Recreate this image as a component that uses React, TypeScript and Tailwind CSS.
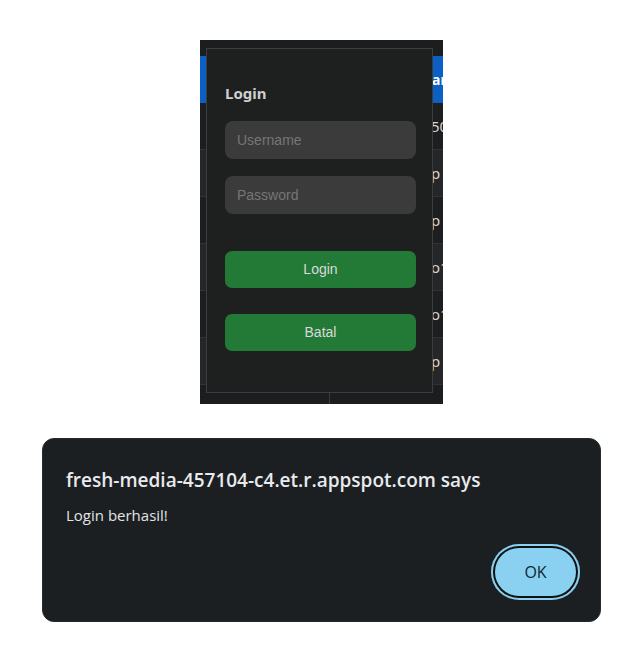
const rows = ['50', 'p', 'p', 'o1', 'o1', 'p'];

function TableBehind() {
  return (
    <div className="absolute inset-0 overflow-hidden bg-[#1c1d1e]">
      <div className="h-[16px]" />
      <div className="grid h-[47px] grid-cols-[130px_102px_1fr] items-center bg-[#0b5fc5] text-[14px] font-bold text-white">
        <div />
        <div />
        <div>ama</div>
      </div>
      {rows.map((r, i) => (
        <div
          key={i}
          className={`grid h-[47px] grid-cols-[130px_101px_1fr] items-center border-b border-[#303234] text-[15px] text-[#d4d4d4] ${
            i % 2 === 1 ? 'bg-[#252628]' : 'bg-[#1d1e1f]'
          }`}
        >
          <div className="h-full border-r border-[#303234]" />
          <div />
          <div>{r}</div>
        </div>
      ))}
      <div className="grid h-[20px] grid-cols-[130px_1fr]">
        <div className="h-full border-r border-[#3a3c3e]" />
        <div />
      </div>
    </div>
  );
}

function LoginModal() {
  return (
    <div className="absolute left-[6px] top-[8px] flex h-[345px] w-[227px] flex-col border border-[#3c3d3e] bg-[#1e1f1f] px-[18px] pt-[34px] font-['Liberation_Sans',Arial,sans-serif]">
      <h2 className="mb-[18px] font-['Noto_Sans',sans-serif] text-[15px] font-bold leading-[20px] text-[#cfcfcf]">Login</h2>
      <input
        className="h-[38px] w-[191px] rounded-[8px] bg-[#3b3b3b] px-[12px] text-[14px] text-[#ddd] outline-none placeholder:text-[#767676]"
        placeholder="Username"
      />
      <input
        type="password"
        className="mt-[17px] h-[38px] w-[191px] rounded-[8px] bg-[#3b3b3b] px-[12px] text-[14px] text-[#ddd] outline-none placeholder:text-[#767676]"
        placeholder="Password"
      />
      <button className="mt-[37px] h-[37px] w-[191px] rounded-[7px] bg-[#237a37] text-[14px] text-[#d9d9d9]">Login</button>
      <button className="mt-[26px] h-[37px] w-[191px] rounded-[7px] bg-[#237a37] text-[14px] text-[#d9d9d9]">Batal</button>
    </div>
  );
}

function AlertDialog() {
  return (
    <div className="ml-[42px] mt-[34px] flex h-[184px] w-[559px] flex-col rounded-[12px] border border-[#262b2f] bg-[#1b1f22] pl-[23px] pr-[20px] pt-[28px] font-['Open_Sans','Noto_Sans',sans-serif]">
      <div className="text-[19px] font-semibold leading-[26px] text-[#e8eaed]">fresh-media-457104-c4.et.r.appspot.com says</div>
      <div className="mt-[12px] text-[15px] leading-[20px] text-[#e3e3e3]">Login berhasil!</div>
      <div className="mt-[19px] flex justify-end">
        <button className="flex h-[56px] w-[89px] items-center justify-center rounded-full bg-[#8ad1f1] text-[16px] text-[#0b2735] shadow-[inset_0_0_0_2px_#8ad1f1,inset_0_0_0_4px_#111]">
          OK
        </button>
      </div>
    </div>
  );
}

export default function App() {
  return (
    <div className="min-h-[653px] w-[635px] bg-white pt-[40px]">
      <div className="relative ml-[200px] h-[364px] w-[243px]">
        <TableBehind />
        <LoginModal />
      </div>
      <AlertDialog />
    </div>
  );
}
